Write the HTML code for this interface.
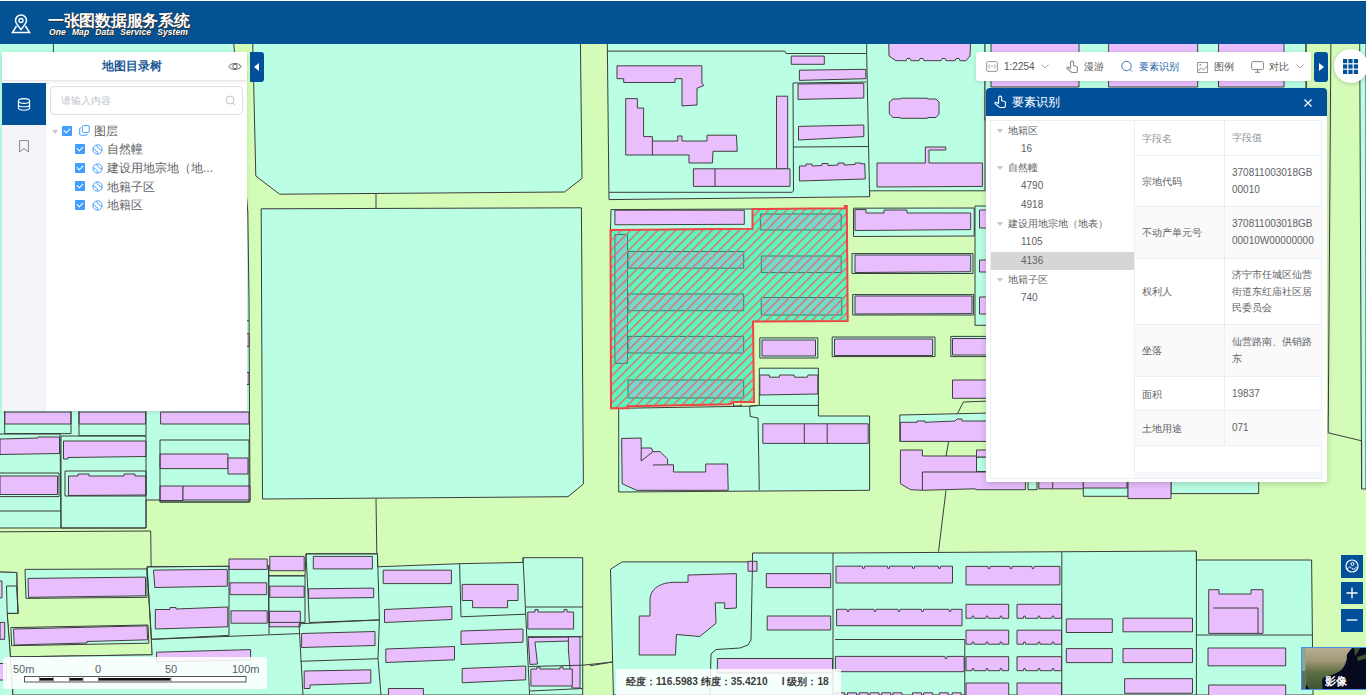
<!DOCTYPE html>
<html><head><meta charset="utf-8">
<style>
*{box-sizing:border-box;margin:0;padding:0}
html,body{width:1366px;height:695px;overflow:hidden;background:#d3fcb9;font-family:"Liberation Sans",sans-serif}
.map{position:absolute;left:0;top:0}
.hdr{position:absolute;left:0;top:0;width:1366px;height:44px;background:#025294;border-top:1px solid #fff;box-shadow:inset 0 1px 0 #014a8c}
.logo{position:absolute;left:11px;top:13px}
.ttl{position:absolute;left:48px;top:10px;color:#fff;font-size:16px;font-weight:bold;letter-spacing:-0.3px;white-space:nowrap;text-shadow:0 0 1px #222,1px 1px 0 #333}
.sub{position:absolute;left:49px;top:26px;color:#fff;font-size:8.5px;font-weight:bold;font-style:italic;word-spacing:3.6px;letter-spacing:0.1px;white-space:nowrap;text-shadow:0 0 1px #222,1px 1px 0 #333}
.lp{position:absolute;left:2px;top:52px;width:245px;height:359px;background:#fff;box-shadow:0 1px 4px rgba(0,0,0,.12)}
.lph{position:absolute;left:0;top:0;width:245px;height:29px;border-bottom:1px solid #e4e7ed;box-shadow:0 2px 3px rgba(0,0,0,.06)}
.lph .t{position:absolute;left:7px;width:100%;top:7px;text-align:center;font-size:11.5px;font-weight:bold;color:#1d5a98}
.lside{position:absolute;left:0;top:30px;width:44px;height:329px;background:#f4f5f9;border-right:1px solid #eceef3}
.lside .act{position:absolute;left:0;top:0;width:44px;height:42px;background:#02509a}
.colbtn{position:absolute;left:250px;top:52px;width:14px;height:30px;background:#02509a;border-radius:0 3px 3px 0}
.srch{position:absolute;left:47.5px;top:34px;width:193.5px;height:29px;border:1px solid #dcdfe6;border-radius:4px;background:#fff}
.srch span{position:absolute;left:10.5px;top:7px;font-size:10px;color:#c0c4cc}
.tree{position:absolute;left:0;top:0;font-size:12px;color:#606266}
.row{position:absolute;white-space:nowrap;height:16px;line-height:16px}
.cb{position:absolute;width:10px;height:10px;background:#409eff;border-radius:1px}
.cb:after{content:"";position:absolute;left:3px;top:1px;width:3px;height:5px;border:solid #fff;border-width:0 1.3px 1.3px 0;transform:rotate(45deg)}
.tb{position:absolute;left:976px;top:52px;width:335px;height:29px;background:#fff;border-radius:3px;box-shadow:0 1px 4px rgba(0,0,0,.15);font-size:10px;color:#555}
.tb .it{position:absolute;top:8px;white-space:nowrap;line-height:13px}
.rbtn{position:absolute;left:1314px;top:52px;width:14px;height:30px;background:#02509a;border-radius:3px}
.circ{position:absolute;left:1333.5px;top:49.2px;width:34px;height:34px;border-radius:50%;background:#fff;box-shadow:0 1px 4px rgba(0,0,0,.2)}
.fp{position:absolute;left:986px;top:88px;width:341px;height:394px;background:#fff;border-radius:4px 4px 2px 2px;box-shadow:0 2px 6px rgba(0,0,0,.18);overflow:hidden}
.fph{position:absolute;left:0;top:0;width:341px;height:28px;background:#02509a;color:#fff;font-size:11.5px}
.fbox{position:absolute;left:4px;top:32px;width:332px;height:359px;border:1px solid #ebeef5}
.ft{position:absolute;left:0;top:0;width:144px;height:357px;font-size:10px;color:#606266}
.ft .r{position:absolute;left:0;width:143px;height:18px;line-height:18px;white-space:nowrap}
.tbl{position:absolute;left:143px;top:0;width:189px;height:351px;font-size:10px;color:#606266;border-left:1px solid #ebeef5}
.tbl .tr{position:absolute;left:0;width:188px;border-bottom:1px solid #ebeef5}
.tbl .tr.s{background:#fafafa}
.tbl .k{position:absolute;left:7px;white-space:nowrap}
.tbl .v{position:absolute;left:97px;width:84px;line-height:16.5px;word-break:break-all}
.tbl .dv{position:absolute;left:89px;top:0;bottom:0;border-left:1px solid #ebeef5}
.zb{position:absolute;left:1341px;width:22px;height:22.6px;background:#02509a}
.scale{position:absolute;left:3px;top:657px;width:264px;height:32px;background:rgba(255,255,255,.88);border-radius:3px;font-size:10.5px;color:#58606a}
.coord{position:absolute;left:616px;top:669px;width:225px;height:26px;background:rgba(255,255,255,.85);font-size:10.2px;font-weight:bold;color:#3c3c3c}
.img{position:absolute;left:1301px;top:647px;width:66px;height:43px;border:1px solid #4a8fe8;border-right:none;overflow:hidden;background:#070a1f}
</style></head><body>
<svg class="map" width="1366" height="695" viewBox="0 0 1366 695">
<defs><pattern id="hatch" patternUnits="userSpaceOnUse" width="6.4" height="6.4" patternTransform="rotate(45)"><rect x="0" y="0" width="1.35" height="6.4" fill="#f06262"/></pattern></defs>
<rect width="1366" height="695" fill="#d3fcb9"/>
<g fill="#d3fcb9" stroke="#3c3c3c" stroke-width="1"><path d="M-1,531.8 L150.7,531 L152.2,654.8 L10.4,656.9 L7.2,613.4 L18,613.4 L16.8,572.5 L-1,572Z"/></g>
<g fill="#bafee3" stroke="#3c3c3c" stroke-width="1"><path d="M-1,42 L233.6,42 L247.8,212 L249,300 L249.5,411 L250,502 L160,502 L160,500 L146,500 L146,528 L61,528 L-1,528Z"/><path d="M252.7,42 L580.4,42 L582,178.4 L564.6,192 L279.6,194.2 L255.8,176Z"/><path d="M261.2,208.8 L581.4,207.8 L583.4,484 L568,496.7 L262.5,499Z"/><path d="M-1,572 L16.8,572.5 L16.8,586 L18,613.4 L7.2,613.4 L10.4,656.9 L13,697 L-1,697Z"/><path d="M25,569.4 L147,568.9 L147,597.3 L26,598.4Z"/><path d="M10.9,627.6 L148,625 L148.9,643.2 L11.6,645.7Z"/><path d="M10.4,656.9 L152.2,654.8 L147,566.8 L229,566.3 L229,565.5 L268.7,565.5 L268.7,575.8 L305,575.8 L306,553.8 L377.5,553.8 L377.5,566.8 L459.6,563.7 L523,562.4 L523,557.7 L582.7,557.7 L582.7,695 L13,695Z"/><path d="M607.3,42 L985,42 L985,190.8 L869.6,190.8 L869.6,196.7 L609,199.6Z"/><path d="M985,42 L1306,42 L1306,120 L985,120Z"/><path d="M1359.7,42 L1366,42 L1366,489 L1361.6,489Z"/><path d="M611,209.6 L752.5,209 L752.5,228.7 L610.5,230.1Z"/><path d="M853.5,208.2 L974.2,208 L974.2,236 L853.5,236.5Z"/><path d="M975,206 L986.8,206 L986.8,325.3 L975,325.3Z"/><path d="M852,253.6 L973,253.6 L973,273.5 L852,273.5Z"/><path d="M852.7,294.6 L973.6,294.6 L973.6,315 L852.7,315Z"/><path d="M759.8,337.9 L817.8,337.9 L817.8,358 L759.8,358Z"/><path d="M832.2,337 L935,337 L935,356.6 L832.2,356.6Z"/><path d="M950.8,336.4 L987,336.4 L987,356.6 L950.8,356.6Z"/><path d="M618.7,408.3 L749.6,406.2 L759.3,405.4 L759.3,368.2 L818.4,368.2 L818.4,416 L869.6,416 L869.6,490.3 L618.7,492Z"/><path d="M899.8,415 L990,413 L990,441.4 L899.8,441.4Z"/><path d="M976.5,457 L987,457 L987,471.5 L976.5,471.5Z"/><path d="M1028,470 L1037,470 L1037,489.7 L1028,489.7Z"/><path d="M1083.3,470 L1128,470 L1128,496.3 L1083.3,496.3Z"/><path d="M1171,470 L1258.7,470 L1258.7,493.6 L1171,493.6Z"/><path d="M610.5,569.2 L622.2,561.9 L752.5,561.9 L752.5,553 L833,553 L1196.4,551 L1196.4,560 L1311.6,560 L1313,695 L613.4,695Z"/></g>
<g fill="#e8befc" stroke="#404040" stroke-width="1"><path d="M240,333.6 L249,333.6 L249,346.5 L240,346.5Z"/><path d="M240,372.4 L249,372.4 L249,384.5 L240,384.5Z"/><path d="M4.7,412 L71,412 L71,424 L4.7,424Z"/><path d="M79,412 L145.6,412 L145.6,424 L79,424Z"/><path d="M160.6,412 L249,412 L249,424 L160.6,424Z"/><path d="M0,439 L38,438 L38,437 L59.5,437 L59.5,453.5 L0,454.5Z"/><path d="M0,476 L57.5,476 L57.5,494.5 L0,494.5Z"/><path d="M63.5,441 L146,441 L146,456.5 L68,457.5 L68,459 L63.5,459Z"/><path d="M68.5,476 L78,476 L78,474 L89,474 L89,476 L124,476 L124,474 L135,474 L135,476 L146,476 L146,495 L68.5,495.5Z"/><path d="M160,454 L228,454 L228,468.6 L160,468.6Z"/><path d="M228,458 L248,458 L248,474 L228,474Z"/><path d="M160,486 L183,486 L183,500.5 L160,500.5Z"/><path d="M183,486 L250,486 L250,500 L183,500Z"/><path d="M-1,581 L2,581 L2,597.8 L-1,597.8Z"/><path d="M0,622.4 L4.7,622.4 L4.7,639.3 L0,639.3Z"/><path d="M-2,663.5 L6.5,663.5 L6.5,680 L-2,680Z"/><path d="M28,578.4 L145.5,577.1 L145.5,595.8 L28.5,597.3Z"/><path d="M13.5,629 L147,625.8 L147.6,639.8 L87,641.5 L87,643 L14.2,645Z"/><path d="M153.5,570.1 L227.3,569.4 L227.3,586.2 L154.8,587.5Z"/><path d="M155.3,609.5 L170,609.5 L170,607.5 L176,607.5 L176,609 L227.8,607 L227.8,626.8 L155.3,629Z"/><path d="M229,559 L267.2,559 L267.2,569.4 L229,569.4Z"/><path d="M230,582.8 L266.7,582.8 L266.7,594.7 L230,594.7Z"/><path d="M231,610.8 L267.2,610.8 L267.2,623.2 L231,623.2Z"/><path d="M269.8,556.4 L304.2,556.4 L304.2,570.7 L269.8,570.7Z"/><path d="M269.8,586.2 L304.2,586.2 L304.2,597.3 L269.8,597.3Z"/><path d="M269.3,611.3 L300.3,611.3 L300.3,626.8 L269.3,626.8Z"/><path d="M156.6,652.2 L250.6,649.6 L250.6,660 L156.6,662Z"/><path d="M301.6,633.5 L375,631.5 L375,645.5 L301.6,647.5Z"/><path d="M313.3,556.4 L372.4,556.4 L372.4,568.9 L313.3,568.9Z"/><path d="M308.6,588.8 L373.7,588.1 L373.7,597.6 L308.6,598.3Z"/><path d="M304.2,671 L370.8,669.8 L370.8,683 L310,685 L310,688.5 L304.2,688.5Z"/><path d="M383.2,570.2 L451.4,570.2 L451.4,583.6 L383.2,583.6Z"/><path d="M384.5,609.5 L451.9,606.5 L451.9,619.5 L384.5,622.5Z"/><path d="M462.2,584.4 L518,584.4 L518,600.5 L507.6,600.5 L507.6,607.7 L472.6,607.7 L472.6,600.5 L462.2,600.5Z"/><path d="M461,631 L523,629 L523,642.2 L461,644.5Z"/><path d="M385.8,649 L454.5,646.5 L454.5,659.8 L385.8,662.5Z"/><path d="M462.2,668.5 L525.7,666 L525.7,679.8 L462.2,682.8Z"/><path d="M388.4,688.5 L423.4,688.5 L423.4,697 L388.4,697Z"/><path d="M527.8,612 L535,612 L535,609.5 L538,609.5 L538,612 L564,612 L564,609.5 L567,609.5 L567,612 L573.6,612 L573.6,629 L527.8,629Z"/><path d="M528,637.5 L571,637 L571,641 L535,642 L537.5,664 L530,664.5Z"/><path d="M568.4,636.7 L580,636.7 L580,688 L572,688 L570,669 L568.4,650Z"/><path d="M530.9,669 L537,669 L537,667 L540,667 L540,669 L560,669 L560,667 L563,667 L563,669 L572.3,669 L572.3,686 L530.9,686Z"/><path d="M617,65.8 L701.9,65.8 L701.9,83.3 L704,85.4 L697,88.3 L697,105 L682,105.9 L682,78.7 L675,78.7 L675,82.5 L623.7,82.5 L623.7,78.7 L617,78.7Z"/><path d="M625.7,98.6 L637.4,98.6 L637.4,108 L643.6,108 L643.6,136.6 L652.4,136.6 L652.4,141 L677.8,141 L677.8,136 L682,136 L682,141 L707,141 L707,135.2 L736.4,135.2 L737.3,151.3 L713,151.3 L712.4,163 L689,163 L689,155 L625.7,155Z"/><path d="M776.5,96.2 L787.7,96.2 L787.7,168.8 L776.5,168.8Z"/><path d="M693.4,168.8 L790,168.8 L790,186.4 L693.4,186.4Z"/><path d="M791.2,56.1 L824.3,56.1 L824.3,64.3 L791.2,64.3Z"/><path d="M799.4,70.2 L865.8,69.3 L865.8,78.7 L799.4,80.4Z"/><path d="M798,84 L863.8,83.3 L863.8,98 L798,99.4Z"/><path d="M798.5,126.4 L863.8,125 L863.8,136.6 L798.5,140Z"/><path d="M799.4,166 L806,166 L806,164 L812,164 L812,166 L822,165.5 L822,163.5 L828,163.5 L828,165.5 L838,165 L838,163 L844,163 L844,165 L855,164.5 L855,163 L861,163 L861,164 L864.7,163.6 L865.3,179 L799.4,181Z"/><path d="M888.7,42 L970.7,42 L970,56 L966,60.7 L960,60.7 L959,58.5 L956,58.5 L955,60.7 L946,60.7 L945,58.5 L942,58.5 L941,60.7 L924,60.7 L923,58.5 L920,58.5 L919,60.7 L911,60.7 L910,58.5 L907,58.5 L906,60.7 L896,60.7 L889,56Z"/><path d="M893,99 L900,99 L901,98.2 L927,98.2 L928,99 L936,99 L939,102 L939,114 L936,117.5 L928,117.5 L927,118.3 L901,118.3 L900,117.5 L893,117.5 L889.3,114 L889.3,102Z"/><path d="M877,163 L925.3,163 L925.3,147 L945.8,147 L945.8,150 L929,150 L929,163 L982.4,163 L982.4,186.4 L877,187Z"/><path d="M991,42 L1079,42 L1079,87 L991,87Z"/><path d="M1108.6,42 L1197.7,42 L1197.7,87 L1108.6,87Z"/><path d="M1218.5,42 L1284,42 L1284,87 L1218.5,87Z"/><path d="M614.9,210.2 L744.3,210.2 L744.3,224.3 L614.9,224.8Z"/><path d="M855,209.6 L866,209.6 L866,213 L884,213 L884,210 L907,210 L907,213 L970.7,213 L970.7,229.6 L855,230.5Z"/><path d="M855,255 L970.7,255 L970.7,271.7 L855,272.5Z"/><path d="M855,296 L972,296 L972,313.6 L855,314Z"/><path d="M762,340 L815.5,340 L815.5,356 L762,356Z"/><path d="M834.5,339 L932.6,339 L932.6,355.5 L834.5,355.5Z"/><path d="M952.5,338.5 L987,338.5 L987,355 L952.5,355Z"/><path d="M979.5,260 L987,260 L987,272 L979.5,272Z"/><path d="M979.5,297 L987,297 L987,314 L979.5,314Z"/><path d="M979.5,210 L987,210 L987,228 L979.5,228Z"/><path d="M759.8,375 L769.3,375 L769.6,377.2 L779.4,377.2 L779.8,375 L794,375 L794.6,377.2 L807.5,377.2 L808,375 L817.8,375 L817.8,394 L759.8,395Z"/><path d="M621.6,438.5 L641.2,438 L641.2,448 L651.5,448 L653,451.6 L660,451.6 L667.6,459 L667.6,464.8 L673.5,464.8 L673.5,472 L705.7,472 L705.7,464 L727.6,464 L728.2,490.3 L636.8,490.3 L622.2,483.8Z"/><path d="M762.8,423.8 L868.2,423.8 L868.2,443.4 L762.8,443.4Z"/><path d="M952.5,380 L990,380 L990,398.3 L952.5,398.3Z"/><path d="M900.4,422.3 L917,422.3 L917,421 L925,421 L925,422.3 L955,421 L957,419 L962,419 L962,421 L990,421 L990,441.4 L900.4,441.4Z"/><path d="M900.4,450 L922.4,450 L922.4,456 L976.5,456 L976.5,472 L1025.4,472 L1025.4,489.7 L976,489.7 L975,488.8 L922.4,490.3 L910.7,489.7 L900.4,483.8Z"/><path d="M976.5,450 L987,450 L987,457 L976.5,457Z"/><path d="M1038.8,470 L1083.3,470 L1083.3,488.8 L1038.8,488.8Z"/><path d="M1083.3,470 L1127,470 L1127,488 L1083.3,488Z"/><path d="M1128,470 L1171,470 L1171,498.6 L1128,498.6Z"/><path d="M639.2,616 L650,616 L650,600 C650,589 660,582.3 675,582.3 L688,582.3 L688,575 L736.4,573.6 L736.4,608 L724.7,608.7 L724.7,602.8 L715.3,602.8 L716,623.3 L699.8,636.5 L676.4,634.5 L675.5,655 L639.2,655 Z"/><path d="M748,561.3 L757,561.3 L757,571.2 L748,571.2Z"/><path d="M766.3,573.6 L830.7,573.6 L830.7,587.6 L766.3,587.6Z"/><path d="M767.2,616 L830.7,616 L830.7,630 L767.2,630Z"/><path d="M717.4,658.5 L832.5,658.5 L832.5,673 L717.4,673Z"/><path d="M836,566.2 L862.4,566.2 L862.8,568.4 L864.2,568.4 L864.6,566.2 L887.4,566.2 L887.8,568.4 L889.2,568.4 L889.6,566.2 L912.4,566.2 L912.8,568.4 L914.2,568.4 L914.6,566.2 L938.4,566.2 L938.8,568.4 L940.2,568.4 L940.6,566.2 L952.5,566.2 L952.5,583 L836,583Z"/><path d="M836.6,609.3 L846.9,609.3 L847.3,611.5 L848.7,611.5 L849.1,609.3 L873.9,609.3 L874.3,611.5 L875.7,611.5 L876.1,609.3 L897.9,609.3 L898.3,611.5 L899.7,611.5 L900.1,609.3 L921.4,609.3 L921.8,611.5 L923.2,611.5 L923.6,609.3 L948.9,609.3 L949.3,611.5 L950.7,611.5 L951.1,609.3 L962,609.3 L962,625.7 L836.6,625.7Z"/><path d="M835.4,656.4 L944.9,656.4 L945.3,658.6 L946.7,658.6 L947.1,656.4 L964.2,656.4 L964.2,671.7 L835.4,671.7Z"/><path d="M966,566.4 L987.9,566.4 L988.3,568.6 L989.7,568.6 L990.1,566.4 L1009.9,566.4 L1010.3,568.6 L1011.7,568.6 L1012.1,566.4 L1031.9,566.4 L1032.3,568.6 L1033.7,568.6 L1034.1,566.4 L1059.9,566.4 L1059.9,584.9 L966,584.9Z"/><path d="M966,604.3 L1008.7,604.3 L1008.7,618.3 L1002.1,618.3 L1001.7,616.1 L1000.3,616.1 L999.9,618.3 L988.1,618.3 L987.7,616.1 L986.3,616.1 L985.9,618.3 L974.1,618.3 L973.7,616.1 L972.3,616.1 L971.9,618.3 L966,618.3Z"/><path d="M1017,604.3 L1061.5,604.3 L1061.5,618.3 L1054.1,618.3 L1053.7,616.1 L1052.3,616.1 L1051.9,618.3 L1040.1,618.3 L1039.7,616.1 L1038.3,616.1 L1037.9,618.3 L1025.6,618.3 L1025.2,616.1 L1023.8,616.1 L1023.4,618.3 L1017,618.3Z"/><path d="M966,630.2 L1008.7,630.2 L1008.7,644.2 L1002.1,644.2 L1001.7,642 L1000.3,642 L999.9,644.2 L988.1,644.2 L987.7,642 L986.3,642 L985.9,644.2 L974.1,644.2 L973.7,642 L972.3,642 L971.9,644.2 L966,644.2Z"/><path d="M1017,630.2 L1061.5,630.2 L1061.5,644.2 L1054.1,644.2 L1053.7,642 L1052.3,642 L1051.9,644.2 L1040.1,644.2 L1039.7,642 L1038.3,642 L1037.9,644.2 L1025.6,644.2 L1025.2,642 L1023.8,642 L1023.4,644.2 L1017,644.2Z"/><path d="M966,656.7 L1008.7,656.7 L1008.7,670.7 L1002.1,670.7 L1001.7,668.5 L1000.3,668.5 L999.9,670.7 L988.1,670.7 L987.7,668.5 L986.3,668.5 L985.9,670.7 L974.1,670.7 L973.7,668.5 L972.3,668.5 L971.9,670.7 L966,670.7Z"/><path d="M1017,656.7 L1061.5,656.7 L1061.5,670.7 L1054.1,670.7 L1053.7,668.5 L1052.3,668.5 L1051.9,670.7 L1040.1,670.7 L1039.7,668.5 L1038.3,668.5 L1037.9,670.7 L1025.6,670.7 L1025.2,668.5 L1023.8,668.5 L1023.4,670.7 L1017,670.7Z"/><path d="M966,683 L1008.7,683 L1008.7,697 L966,697Z"/><path d="M1017,683 L1061.5,683 L1061.5,697 L1017,697Z"/><path d="M1066.3,618.9 L1112.3,618.9 L1112.3,632.5 L1066.3,632.5Z"/><path d="M1123,618.2 L1192.5,618.2 L1192.5,631.8 L1123,631.8Z"/><path d="M1066.3,648.6 L1112.3,648.6 L1112.3,662.6 L1066.3,662.6Z"/><path d="M1123,648.6 L1192.5,648.6 L1192.5,662.6 L1123,662.6Z"/><path d="M1124.6,678.7 L1192.5,678.7 L1192.5,693.3 L1124.6,693.3Z"/><path d="M1208.7,589.7 L1219,589.7 L1219,594 L1251,594 L1251,589.7 L1263,589.7 L1263,633.4 L1208.7,633.4Z"/><path d="M1208,648 L1285.7,648 L1285.7,665.8 L1208,665.8Z"/><path d="M1208.7,685 L1285.7,685 L1285.7,697 L1208.7,697Z"/><path d="M835.6,692.8 L844.6,692.8 L844.6,697 L835.6,697Z"/><path d="M847.4,692.8 L856.4,692.8 L856.4,697 L847.4,697Z"/><path d="M859,692.8 L868,692.8 L868,697 L859,697Z"/><path d="M870,692.8 L879,692.8 L879,697 L870,697Z"/><path d="M881.7,692.8 L890.7,692.8 L890.7,697 L881.7,697Z"/><path d="M892.9,692.8 L901.9,692.8 L901.9,697 L892.9,697Z"/><path d="M912.5,692.8 L921.5,692.8 L921.5,697 L912.5,697Z"/><path d="M923.7,692.8 L932.7,692.8 L932.7,697 L923.7,697Z"/><path d="M939.3,692.8 L948.3,692.8 L948.3,697 L939.3,697Z"/><path d="M952.2,692.8 L961.2,692.8 L961.2,697 L952.2,697Z"/></g>
<g class="p" fill="#e8befc" stroke="#404040" stroke-width="1"></g>
<g fill="none" stroke="#3c3c3c" stroke-width="1"><path d="M53.4,42 L53.4,52"/><path d="M240,320.7 L249,320.7"/><path d="M4.7,405 L4.7,433.6 L71,433.6 L71,405"/><path d="M79,405 L79,435.7 L146,435.7 L146,405"/><path d="M0,434 L60,434 L61,528"/><path d="M0,473 L59,473 L59,496.6 L0,496.6"/><path d="M0,511 L61,511"/><path d="M61,436 L146,436 L146,528 L61,528Z"/><path d="M65,471 L146,471 L146,496 L65,496Z"/><path d="M160,440 L249,440 L249,502 L160,502Z"/><path d="M376,194 L376,208.5"/><path d="M376,499 L376.8,553.8"/><path d="M6.5,586 L16.8,586 L18,613.4 L7.2,613.4Z"/><path d="M147,566.8 L229,566.3 L229,635.4 L151.5,639.3Z"/><path d="M268.7,565.5 L269,634"/><path d="M268.7,575.8 L305,575.8 L305,622.4 L268.7,622.4Z"/><path d="M151.5,639.3 L300.3,633.6"/><path d="M299,623.8 L303,695"/><path d="M299,623.8 L379.4,619.9"/><path d="M306,553.8 L377.5,553.8 L379.4,619.9 L309.4,622.5Z"/><path d="M300.4,661.3 L378,658.7 L381,695"/><path d="M379.4,619.9 L378,658.7"/><path d="M459.6,563.7 L461,616.8 L525.7,614.2"/><path d="M523,557.7 L529.6,695"/><path d="M525.5,607 L582.7,607"/><path d="M527.8,636.7 L582.7,636.7"/><path d="M529,666.5 L582.7,665.2"/><path d="M529.6,691 L582.7,688.5"/><path d="M582.7,665.2 L612.4,662.1"/><path d="M607.6,51.1 L784.7,51.1 L786,53.5 L866.7,53.5 L869.6,196.7"/><path d="M609,192.3 L792,192.3 L793.5,191 L793,83 L866,82"/><path d="M793.5,147 L868,146.5"/><path d="M866.7,53.5 L866.7,42"/><path d="M652.4,141 L652.4,155"/><path d="M715,168.8 L715,186.4"/><path d="M1306,42 L1308,300"/><path d="M1330.9,42 L1328.2,432.8 L1361.6,440.8 L1361.6,489"/><path d="M733.5,402 L733.5,406 L741,406 L741,404"/><path d="M759.3,405.4 L749.6,406.2"/><path d="M749.6,406.2 L750.2,416.5 L758,418 L759.3,490.3"/><path d="M759.3,405.4 L818.4,405.4"/><path d="M641.2,448 L641.2,461 L653,451.6"/><path d="M653,465 L667.6,464.8"/><path d="M804.3,423.8 L804.3,444"/><path d="M827.2,423.8 L827.2,444"/><path d="M957.5,413.6 L963.4,402 L990,401"/><path d="M922.4,472 L976.5,472"/><path d="M922.4,472 L922.4,490.3"/><path d="M948.7,441.4 L946,456"/><path d="M946,490.3 L938.5,551.6"/><path d="M1052.7,470 L1052.7,488.8"/><path d="M752.5,561.9 L751,640 L748,645 L740,648 L716,649.5 L711,654 L710,695"/><path d="M833,553 L833,695"/><path d="M835,639.5 L964.8,639.5 L964.8,695"/><path d="M1061.8,551.6 L1061.8,695"/><path d="M1196.4,551 L1196.4,695"/><path d="M1196.4,635 L1312.3,635"/><path d="M590,665.8 L612,662"/><path d="M1213,608 L1258,608 L1258,633"/></g>
<path d="M610.5,230.1 L752.5,228.7 L752.5,209 L844.8,208.2 L844.8,206 L846.8,206 L847.7,321 L753,321.5 L754,402 L733.5,402 L730.6,404.2 L628,406.2 L628,408.3 L611,408.3Z" fill="#5cf6c0" stroke="none"/>
<g fill="#70dccd" stroke="#2f8272" stroke-width="1">
<path d="M614.9,234.5 L627.5,234.5 L627.5,363.4 L614.9,363.4Z"/>
<path d="M628,251.5 L743.7,251.5 L743.7,268.2 L628,268.2Z"/>
<path d="M628,294 L743.7,294 L743.7,310.7 L628,310.7Z"/>
<path d="M628,336.4 L743.7,336.4 L743.7,353 L628,353Z"/>
<path d="M760.4,214 L841.2,214 L841.2,230 L760.4,230Z"/>
<path d="M761.3,256 L841.2,256 L841.2,272.6 L761.3,272.6Z"/>
<path d="M761.3,297.5 L841.8,297.5 L841.8,315 L761.3,315Z"/>
<path d="M628,380 L743.7,380 L743.7,398 L628,398Z"/>
</g>
<path d="M610.5,230.1 L752.5,228.7 L752.5,209 L844.8,208.2 L844.8,206 L846.8,206 L847.7,321 L753,321.5 L754,402 L733.5,402 L730.6,404.2 L628,406.2 L628,408.3 L611,408.3Z" fill="url(#hatch)" stroke="#f04545" stroke-width="2"/>
</svg>
<div class="hdr">
  <svg class="logo" width="20" height="20" viewBox="0 0 20 20"><path d="M10,15.5 C6.5,11.5 4.5,9 4.5,6.5 A5.5,5.5 0 0 1 15.5,6.5 C15.5,9 13.5,11.5 10,15.5Z" fill="none" stroke="#fff" stroke-width="1.5"/><circle cx="10" cy="6.5" r="2" fill="none" stroke="#fff" stroke-width="1.4"/><path d="M5.5,12 L1.5,18.5 L18.5,18.5 L14.5,12" fill="none" stroke="#fff" stroke-width="1.5"/></svg>
  <div class="ttl">一张图数据服务系统</div>
  <div class="sub">One Map Data Service System</div>
</div>

<div class="lp">
  <div class="lph"><div class="t">地图目录树</div>
   <svg style="position:absolute;left:225.5px;top:9px" width="14" height="11" viewBox="0 0 14 11"><path d="M0.8,5.5 C3,1.5 11,1.5 13.2,5.5 C11,9.5 3,9.5 0.8,5.5Z" fill="none" stroke="#666" stroke-width="1"/><circle cx="7" cy="5.5" r="2.2" fill="none" stroke="#666" stroke-width="1"/></svg>
  </div>
  <div class="lside"><div class="act" style="top:1px">
    <svg style="position:absolute;left:15px;top:14.5px" width="14" height="13" viewBox="0 0 14 13"><ellipse cx="7" cy="3" rx="5.6" ry="2.4" fill="none" stroke="#fff" stroke-width="1.1"/><path d="M1.4,3 V9.8 C1.4,11.1 3.9,12.2 7,12.2 C10.1,12.2 12.6,11.1 12.6,9.8 V3 M1.4,6.4 C1.4,7.7 3.9,8.8 7,8.8 C10.1,8.8 12.6,7.7 12.6,6.4" fill="none" stroke="#fff" stroke-width="1.1"/></svg>
  </div>
  <svg style="position:absolute;left:17px;top:57.5px" width="10" height="13" viewBox="0 0 10 13"><path d="M0.6,0.6 H9.4 V12 L5,8.3 L0.6,12Z" fill="none" stroke="#888" stroke-width="1"/></svg>
  </div>
  <div class="srch"><span>请输入内容</span>
   <svg style="position:absolute;left:174.5px;top:8px" width="11" height="11" viewBox="0 0 11 11"><circle cx="5" cy="5" r="4" fill="none" stroke="#c0c4cc" stroke-width="1"/><path d="M8,8 L10,10" stroke="#c0c4cc" stroke-width="1"/></svg>
  </div>
  <div class="tree">
   <div class="row" style="left:50px;top:72px"><span style="position:absolute;left:0;top:6px;width:0;height:0;border-left:3px solid transparent;border-right:3px solid transparent;border-top:4px solid #c0c4cc"></span></div>
   <div class="cb" style="left:60px;top:74px"></div>
   <svg style="position:absolute;left:77px;top:73px" width="11" height="11" viewBox="0 0 11 11"><rect x="3.3" y="0.6" width="6.9" height="6.9" rx="1.2" fill="none" stroke="#409eff" stroke-width="1"/><path d="M1.8,2.8 a1,1 0 0 0 -1.1,1 V9.2 a1,1 0 0 0 1,1 H7.2 a1,1 0 0 0 1,-1.1" fill="none" stroke="#409eff" stroke-width="1"/></svg>
   <div class="row" style="left:92px;top:71px">图层</div>
   <div class="cb" style="left:73px;top:92px"></div><svg style="position:absolute;left:89.5px;top:91.5px" width="11" height="11" viewBox="0 0 11 11"><circle cx="5.5" cy="5.5" r="4.6" fill="none" stroke="#409eff" stroke-width="1"/><path d="M4.6,1 C5.2,3.2 7.5,5.6 10,6.2 M1,4.8 C3.4,5.4 5.6,7.6 6.2,10" fill="none" stroke="#409eff" stroke-width="1"/></svg>
   <div class="row" style="left:105px;top:89px">自然幢</div>
   <div class="cb" style="left:73px;top:111px"></div><svg style="position:absolute;left:89.5px;top:110.5px" width="11" height="11" viewBox="0 0 11 11"><circle cx="5.5" cy="5.5" r="4.6" fill="none" stroke="#409eff" stroke-width="1"/><path d="M4.6,1 C5.2,3.2 7.5,5.6 10,6.2 M1,4.8 C3.4,5.4 5.6,7.6 6.2,10" fill="none" stroke="#409eff" stroke-width="1"/></svg>
   <div class="row" style="left:105px;top:108px">建设用地宗地（地...</div>
   <div class="cb" style="left:73px;top:129px"></div><svg style="position:absolute;left:89.5px;top:128.5px" width="11" height="11" viewBox="0 0 11 11"><circle cx="5.5" cy="5.5" r="4.6" fill="none" stroke="#409eff" stroke-width="1"/><path d="M4.6,1 C5.2,3.2 7.5,5.6 10,6.2 M1,4.8 C3.4,5.4 5.6,7.6 6.2,10" fill="none" stroke="#409eff" stroke-width="1"/></svg>
   <div class="row" style="left:105px;top:127px">地籍子区</div>
   <div class="cb" style="left:73px;top:148px"></div><svg style="position:absolute;left:89.5px;top:147.5px" width="11" height="11" viewBox="0 0 11 11"><circle cx="5.5" cy="5.5" r="4.6" fill="none" stroke="#409eff" stroke-width="1"/><path d="M4.6,1 C5.2,3.2 7.5,5.6 10,6.2 M1,4.8 C3.4,5.4 5.6,7.6 6.2,10" fill="none" stroke="#409eff" stroke-width="1"/></svg>
   <div class="row" style="left:105px;top:145px">地籍区</div>
  </div>
</div>
<div class="colbtn"><span style="position:absolute;left:4px;top:11px;width:0;height:0;border-top:4px solid transparent;border-bottom:4px solid transparent;border-right:5px solid #fff"></span></div>

<div class="tb">
  <svg style="position:absolute;left:10px;top:9px" width="12" height="11" viewBox="0 0 12 11"><rect x="0.6" y="0.6" width="10.8" height="9.8" rx="1" fill="none" stroke="#999" stroke-width="1"/><path d="M3,3.5 V7.5 M5,5 H7 M9,3.5 V7.5" stroke="#999" stroke-width="0.9"/></svg>
  <div class="it" style="left:28px">1:2254</div>
  <svg style="position:absolute;left:65px;top:12px" width="8" height="5" viewBox="0 0 8 5"><path d="M0.5,0.5 L4,4 L7.5,0.5" fill="none" stroke="#aaa" stroke-width="1"/></svg>
  <svg style="position:absolute;left:90px;top:8px" width="13" height="14" viewBox="0 0 13 14"><path d="M4.6,8.6 V2.6 a1.5,1.5 0 0 1 3,0 V5.6 L10,6.3 a1.5,1.5 0 0 1 1.4,1.5 V11 a1.5,1.5 0 0 1 -1.5,1.5 H6.2 a1.5,1.5 0 0 1 -1.2,-0.6 L0.9,8.4 a1,1 0 0 1 1.4,-1.2 L4.6,8.9" fill="none" stroke="#8a8a8a" stroke-width="1.1"/></svg>
  <div class="it" style="left:108px">漫游</div>
  <svg style="position:absolute;left:145px;top:8px" width="12" height="13" viewBox="0 0 12 13"><circle cx="5.5" cy="6" r="4.7" fill="none" stroke="#3a78b8" stroke-width="1"/><path d="M9,9.5 L11,11.5" stroke="#3a78b8" stroke-width="1"/></svg>
  <div class="it" style="left:163px;color:#1a5ea8">要素识别</div>
  <svg style="position:absolute;left:221px;top:10px" width="11" height="11" viewBox="0 0 11 11"><rect x="0.5" y="0.5" width="10" height="10" fill="none" stroke="#999" stroke-width="1"/><path d="M0.8,9.5 L4,5.8 L6.5,8 L10.3,3.8" fill="none" stroke="#999" stroke-width="1"/><circle cx="3.3" cy="3" r="0.9" fill="#999"/></svg>
  <div class="it" style="left:238px">图例</div>
  <svg style="position:absolute;left:275px;top:9px" width="13" height="12" viewBox="0 0 13 12"><rect x="0.6" y="0.6" width="11.8" height="8" rx="1" fill="none" stroke="#888" stroke-width="1"/><path d="M4,11.3 H9 M6.5,8.6 V11.3" stroke="#888" stroke-width="1"/></svg>
  <div class="it" style="left:293px">对比</div>
  <svg style="position:absolute;left:320px;top:12px" width="8" height="5" viewBox="0 0 8 5"><path d="M0.5,0.5 L4,4 L7.5,0.5" fill="none" stroke="#aaa" stroke-width="1"/></svg>
</div>
<div class="rbtn"><span style="position:absolute;left:5px;top:11px;width:0;height:0;border-top:4px solid transparent;border-bottom:4px solid transparent;border-left:5px solid #fff"></span></div>
<div class="circ"><svg style="position:absolute;left:9.2px;top:9.6px" width="15" height="15" viewBox="0 0 15 15"><g fill="#02509a"><rect x="0" y="0" width="4.2" height="4.2"/><rect x="5.4" y="0" width="4.2" height="4.2"/><rect x="10.8" y="0" width="4.2" height="4.2"/><rect x="0" y="5.4" width="4.2" height="4.2"/><rect x="5.4" y="5.4" width="4.2" height="4.2"/><rect x="10.8" y="5.4" width="4.2" height="4.2"/><rect x="0" y="10.8" width="4.2" height="4.2"/><rect x="5.4" y="10.8" width="4.2" height="4.2"/><rect x="10.8" y="10.8" width="4.2" height="4.2"/></g></svg></div>

<div class="fp">
  <div class="fph">
    <svg style="position:absolute;left:7.5px;top:6.5px" width="13" height="14" viewBox="0 0 13 14"><path d="M4.6,8.6 V2.6 a1.5,1.5 0 0 1 3,0 V5.6 L10,6.3 a1.5,1.5 0 0 1 1.4,1.5 V11 a1.5,1.5 0 0 1 -1.5,1.5 H6.2 a1.5,1.5 0 0 1 -1.2,-0.6 L0.9,8.4 a1,1 0 0 1 1.4,-1.2 L4.6,8.9" fill="none" stroke="#fff" stroke-width="1.1"/></svg>
    <div style="position:absolute;left:26px;top:7px;white-space:nowrap">要素识别</div>
    <svg style="position:absolute;left:318px;top:11px" width="8" height="8" viewBox="0 0 8 8"><path d="M0.5,0.5 L7.5,7.5 M7.5,0.5 L0.5,7.5" stroke="#fff" stroke-width="1.2"/></svg>
  </div>
  <div class="fbox">
    <div class="ft">
      <div class="r" style="top:1px;left:0"><span style="position:absolute;left:6px;top:7px;width:0;height:0;border-left:3px solid transparent;border-right:3px solid transparent;border-top:4px solid #c0c4cc"></span><span style="position:absolute;left:17px">地籍区</span></div>
      <div class="r" style="top:19px"><span style="position:absolute;left:30px">16</span></div>
      <div class="r" style="top:38px"><span style="position:absolute;left:6px;top:7px;width:0;height:0;border-left:3px solid transparent;border-right:3px solid transparent;border-top:4px solid #c0c4cc"></span><span style="position:absolute;left:17px">自然幢</span></div>
      <div class="r" style="top:56px"><span style="position:absolute;left:30px">4790</span></div>
      <div class="r" style="top:75px"><span style="position:absolute;left:30px">4918</span></div>
      <div class="r" style="top:94px"><span style="position:absolute;left:6px;top:7px;width:0;height:0;border-left:3px solid transparent;border-right:3px solid transparent;border-top:4px solid #c0c4cc"></span><span style="position:absolute;left:17px">建设用地宗地（地表）</span></div>
      <div class="r" style="top:112px"><span style="position:absolute;left:30px">1105</span></div>
      <div class="r" style="top:131px;background:#d6d6d6"><span style="position:absolute;left:30px">4136</span></div>
      <div class="r" style="top:150px"><span style="position:absolute;left:6px;top:7px;width:0;height:0;border-left:3px solid transparent;border-right:3px solid transparent;border-top:4px solid #c0c4cc"></span><span style="position:absolute;left:17px">地籍子区</span></div>
      <div class="r" style="top:168px"><span style="position:absolute;left:30px">740</span></div>
    </div>
    <div class="tbl">
      <div class="tr" style="top:0;height:35px;color:#909399"><div class="k" style="top:11px">字段名</div><div class="dv"></div><div class="v" style="top:9px">字段值</div></div>
      <div class="tr" style="top:35px;height:51px"><div class="k" style="top:19px">宗地代码</div><div class="dv"></div><div class="v" style="top:9px">370811003018GB00010</div></div>
      <div class="tr s" style="top:86px;height:52px"><div class="k" style="top:19px">不动产单元号</div><div class="dv"></div><div class="v" style="top:9px">370811003018GB00010W00000000</div></div>
      <div class="tr" style="top:138px;height:66px"><div class="k" style="top:26px">权利人</div><div class="dv"></div><div class="v" style="top:8px">济宁市任城区仙营街道东红庙社区居民委员会</div></div>
      <div class="tr s" style="top:204px;height:52px"><div class="k" style="top:19px">坐落</div><div class="dv"></div><div class="v" style="top:9px">仙营路南、供销路东</div></div>
      <div class="tr" style="top:256px;height:34px"><div class="k" style="top:11px">面积</div><div class="dv"></div><div class="v" style="top:9px">19837</div></div>
      <div class="tr s" style="top:290px;height:35px"><div class="k" style="top:11px">土地用途</div><div class="dv"></div><div class="v" style="top:9px">071</div></div>
    </div>
    <div style="position:absolute;left:144px;top:351px;width:188px;height:6px;background:#f5f6f8"></div>
  </div>
</div>

<div class="zb" style="top:555px"><svg style="position:absolute;left:4px;top:4px" width="14" height="14" viewBox="0 0 14 14"><circle cx="7" cy="7" r="6" fill="none" stroke="#fff" stroke-width="1.2"/><circle cx="7.5" cy="5" r="1.5" fill="none" stroke="#fff" stroke-width="1"/><path d="M2.5,10 C4,7.5 5.5,7.5 7,9.5 C8.5,11 10,10 11.5,8" fill="none" stroke="#fff" stroke-width="1"/></svg></div>
<div class="zb" style="top:581.6px"><svg style="position:absolute;left:5px;top:5px" width="12" height="12" viewBox="0 0 12 12"><path d="M6,0.5 V11.5 M0.5,6 H11.5" stroke="#fff" stroke-width="1.3"/></svg></div>
<div class="zb" style="top:609.2px"><svg style="position:absolute;left:5px;top:5px" width="12" height="12" viewBox="0 0 12 12"><path d="M0.5,6 H11.5" stroke="#fff" stroke-width="1.3"/></svg></div>

<div class="img">
 <svg width="65" height="43" viewBox="0 0 65 43" style="position:absolute;left:0;top:0">
  <defs><linearGradient id="land" x1="0" y1="0" x2="0" y2="1"><stop offset="0" stop-color="#b9ad95"/><stop offset="0.3" stop-color="#a09878"/><stop offset="0.55" stop-color="#5f7042"/><stop offset="1" stop-color="#3a5230"/></linearGradient></defs>
  <rect width="65" height="43" fill="#070a1f"/>
  <path d="M0,0 H50 C47,4 44,6 45,10 C44,15 42,20 38,23 C33,26 28,28 22,29 C18,32 22,38 20,43 H8 C6,38 3,35 0,33Z" fill="url(#land)"/>
  <path d="M52,0 H58 C56,3 55,6 53,8 Z M55,9 C58,8 62,7 65,6 V10 C62,11 59,12 56,13Z" fill="#3d5232"/>
  <rect x="0" y="0" width="3.5" height="43" fill="#8aa59a"/>
  <rect x="0" y="23" width="3.5" height="20" fill="#5d6e66"/>
  <text x="34" y="36.5" font-size="10.5" font-weight="bold" fill="#fff" text-anchor="middle" font-family="Liberation Sans, sans-serif">影像</text>
 </svg>
</div>
<div class="scale">
  <div style="position:absolute;left:10px;top:5.5px;font-size:11px">50m</div>
  <div style="position:absolute;left:92px;top:5.5px;font-size:11px">0</div>
  <div style="position:absolute;left:162px;top:5.5px;font-size:11px">50</div>
  <div style="position:absolute;left:229px;top:5.5px;font-size:11px">100m</div>
  <svg style="position:absolute;left:21px;top:19px" width="223" height="7" viewBox="0 0 223 7">
   <rect x="0.5" y="0.5" width="221.5" height="5.5" fill="#fff" stroke="#555" stroke-width="1"/>
   <rect x="15.4" y="2" width="14" height="2.6" fill="#111"/>
   <rect x="45.4" y="2" width="13.5" height="2.6" fill="#111"/>
   <rect x="74.4" y="2" width="72" height="2.6" fill="#111"/>
   <path d="M15.4,0.5 V6 M29.4,0.5 V6 M45.4,0.5 V6 M59,0.5 V6 M74.4,0.5 V6 M146.9,0.5 V6" stroke="#777" stroke-width="0.8"/>
  </svg>
</div>
<div class="coord"><div style="position:absolute;left:10px;top:6px;white-space:nowrap">经度：116.5983 纬度：35.4210 &nbsp;&nbsp;&nbsp;&nbsp;I 级别：18</div></div>
</body></html>
